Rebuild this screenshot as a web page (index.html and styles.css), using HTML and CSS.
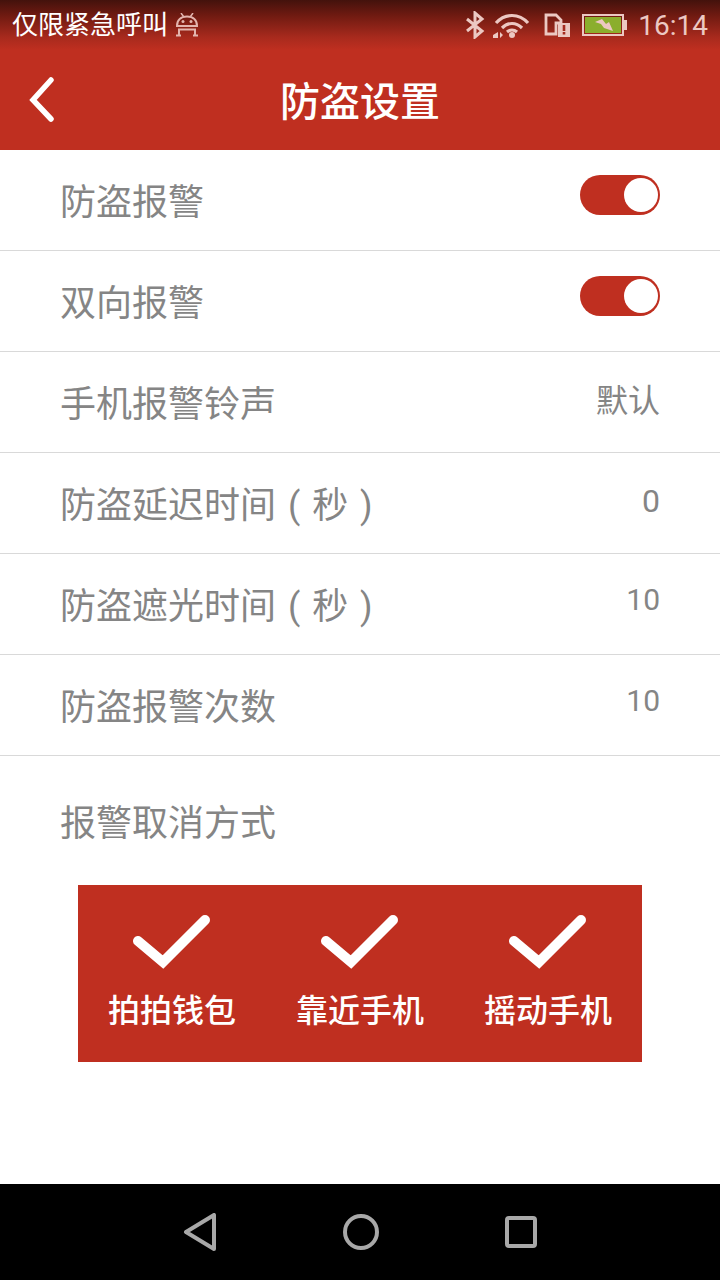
FILE: index.html
```html
<!DOCTYPE html>
<html lang="zh-CN">
<head>
<meta charset="UTF-8">
<meta name="viewport" content="width=device-width, initial-scale=1.0">
<title>防盗设置</title>
<link rel="stylesheet" href="styles.css">
</head>
<body>

<div class="screen">
    <div class="status-bar">
        <div class="status-left">
            <span class="carrier">仅限紧急呼叫</span>
            <svg class="android-icon" width="24" height="24" viewBox="0 0 24 24">
                <path d="M2 13C2 7 6 3.500 12 3.500S22 7 22 13z" fill="none" stroke="#e3b5ae" stroke-width="2"/>
                <path d="M3 16.500h18M4 16.500v6M20 16.500v6M1 22.500h5M18 22.500h5" fill="none" stroke="#e3b5ae" stroke-width="2"/>
                <path d="M6 0l2.500 3.500M18 0l-2.500 3.500" stroke="#e3b5ae" stroke-width="1.500"/>
                <circle cx="8" cy="8.500" r="1.500" fill="#e3b5ae"/>
                <circle cx="16" cy="8.500" r="1.500" fill="#e3b5ae"/>
            </svg>
        </div>
        <div class="status-right">
            <svg class="bluetooth" width="20" height="28" viewBox="0 0 20 28">
                <path d="M2 8l15 12-7 6V2l7 6L2 20" fill="none" stroke="#ecc8c2" stroke-width="3"/>
            </svg>
            <svg class="wifi" width="37" height="26" viewBox="0 0 37 26">
                <path d="M3 11C12 1 26 1 35 11M9 16c6-6 14-6 20 0M14 20c3-2.500 7-2.500 10 0" fill="none" stroke="#ecc8c2" stroke-width="3.200"/>
                <circle cx="19" cy="23" r="3" fill="#ecc8c2"/>
                <path d="M0 23l5-3v6H0zM7 20l3 3-3 3z" fill="#ecc8c2"/>
            </svg>
            <svg class="sim" width="26" height="24" viewBox="0 0 26 24">
                <path d="M2 2h10l5 5v3h-5v11H2z" fill="none" stroke="#ecc8c2" stroke-width="2.800"/>
                <rect x="14" y="10" width="12" height="14" fill="#ecc8c2"/>
                <path d="M20 12v6M20 19v2.500" stroke="#a52b1f" stroke-width="2.600"/>
            </svg>
            <svg class="battery" width="46" height="24" viewBox="0 0 46 24">
                <rect x="1" y="2" width="40" height="20" fill="none" stroke="#ecc8c2" stroke-width="2"/>
                <rect x="3" y="4" width="36" height="16" fill="#8bae2d"/>
                <rect x="42" y="7" width="3" height="10" fill="#ecc8c2"/>
                <path d="M13 9l7-3 4 5 3-2 4 9-9-3-3-4z" fill="#ecc8c2"/>
            </svg>
            <span class="clock">16:14</span>
        </div>
    </div>

    <div class="title-bar">
        <svg class="back-icon" width="28" height="48" viewBox="0 0 28 48">
            <path d="M23 4L5 24l18 19" fill="none" stroke="#fff" stroke-width="5.500" stroke-linecap="round"/>
        </svg>
        <h1>防盗设置</h1>
    </div>

    <div class="content">
        <div class="row">
            <span class="row-label">防盗报警</span>
            <span class="switch"><span class="knob"></span></span>
        </div>
        <div class="row">
            <span class="row-label">双向报警</span>
            <span class="switch"><span class="knob"></span></span>
        </div>
        <div class="row">
            <span class="row-label">手机报警铃声</span>
            <span class="row-value">默认</span>
        </div>
        <div class="row">
            <span class="row-label">防盗延迟时间 ( 秒 )</span>
            <span class="row-value zero">0</span>
        </div>
        <div class="row">
            <span class="row-label">防盗遮光时间 ( 秒 )</span>
            <span class="row-value ten">10</span>
        </div>
        <div class="row">
            <span class="row-label">防盗报警次数</span>
            <span class="row-value ten">10</span>
        </div>

        <div class="cancel-title">报警取消方式</div>
        <div class="cancel-box">
            <div class="cancel-item">
                <svg width="78" height="58" viewBox="0 0 78 58"><path d="M5 28l25 21L72 7" fill="none" stroke="#fff" stroke-width="10" stroke-linecap="round"/></svg>
                <span>拍拍钱包</span>
            </div>
            <div class="cancel-item">
                <svg width="78" height="58" viewBox="0 0 78 58"><path d="M5 28l25 21L72 7" fill="none" stroke="#fff" stroke-width="10" stroke-linecap="round"/></svg>
                <span>靠近手机</span>
            </div>
            <div class="cancel-item">
                <svg width="78" height="58" viewBox="0 0 78 58"><path d="M5 28l25 21L72 7" fill="none" stroke="#fff" stroke-width="10" stroke-linecap="round"/></svg>
                <span>摇动手机</span>
            </div>
        </div>
    </div>

    <div class="nav-bar">
        <svg width="34" height="38" viewBox="0 0 34 38"><path d="M31 2v34L3 19z" fill="none" stroke="#a8a8a8" stroke-width="4" stroke-linejoin="round"/></svg>
        <svg width="36" height="36" viewBox="0 0 36 36"><circle cx="18" cy="18" r="16" fill="none" stroke="#a8a8a8" stroke-width="4"/></svg>
        <svg width="32" height="32" viewBox="0 0 32 32"><rect x="2" y="2" width="28" height="28" rx="2" fill="none" stroke="#a8a8a8" stroke-width="4"/></svg>
    </div>
</div>

</body>
</html>
```

FILE: styles.css
```css
/* Basic page */
html, body {
    margin: 0;
    padding: 0;
}

body {
    font-family: Roboto, "Noto Sans CJK SC", sans-serif;
    background-color: #fff;
}

.screen {
    width: 720px;
    height: 1280px;
    display: flex;
    flex-direction: column;
    overflow: hidden;
}

/* Status bar */
.status-bar {
    height: 50px;
    box-sizing: border-box;
    padding: 0 12px;
    display: flex;
    justify-content: space-between;
    align-items: center;
    background: linear-gradient(to bottom, #43120c 0%, #6e1a11 30%, #a82a1d 75%, #bf2f20 100%);
}

.status-left, .status-right {
    display: flex;
    align-items: center;
}

.carrier {
    color: #fff;
    font-size: 26px;
    line-height: 50px;
}

.android-icon {
    margin-left: 7px;
}

.status-right svg {
    margin-right: 8px;
}

.status-right .wifi {
    margin-right: 14px;
}

.status-right .sim {
    margin-right: 12px;
}

.status-right .battery {
    margin-right: 10px;
}

.clock {
    color: #ecc8c2;
    font-size: 28px;
}

/* Title bar */
.title-bar {
    height: 100px;
    background-color: #bf2f20;
    display: flex;
    align-items: center;
    justify-content: center;
    position: relative;
}

.title-bar h1 {
    margin: 0;
    color: #fff;
    font-size: 40px;
    font-weight: 500;
    padding-bottom: 2px;
}

.back-icon {
    position: absolute;
    left: 28px;
    top: 26px;
}

/* Settings list */
.content {
    flex: 1;
    background-color: #fff;
}

.row {
    height: 101px;
    box-sizing: border-box;
    padding: 0 60px;
    border-bottom: 1px solid #d9d9d9;
    display: flex;
    justify-content: space-between;
    align-items: center;
}

.row-label {
    color: #858585;
    font-size: 36px;
    margin-top: -2px;
    word-spacing: 3px;
}

.row-value {
    color: #858585;
    font-size: 32px;
    margin-top: -8px;
}

.row-value.zero {
    margin-top: -4px;
}

.row-value.ten {
    margin-top: -10px;
    font-size: 30px;
}

.switch {
    width: 80px;
    height: 40px;
    box-sizing: border-box;
    border-radius: 20px;
    background-color: #bf2f20;
    display: flex;
    justify-content: flex-end;
    align-items: center;
    padding-right: 2px;
    margin-top: -10px;
}

.knob {
    width: 34px;
    height: 34px;
    border-radius: 50%;
    background-color: #fff;
}

.cancel-title {
    color: #858585;
    font-size: 36px;
    padding: 41px 60px 0;
    line-height: 54px;
}

.cancel-box {
    margin: 34px 78px 0;
    height: 177px;
    background-color: #bf2f20;
    display: flex;
}

.cancel-item {
    flex: 1;
    display: flex;
    flex-direction: column;
    align-items: center;
    padding-top: 28px;
    color: #fff;
    font-size: 32px;
    font-weight: 500;
}

.cancel-item span {
    margin-top: 14px;
}

/* Bottom nav */
.nav-bar {
    height: 96px;
    background-color: #000;
    display: flex;
    align-items: center;
    padding-left: 183px;
    gap: 126px;
}
```
